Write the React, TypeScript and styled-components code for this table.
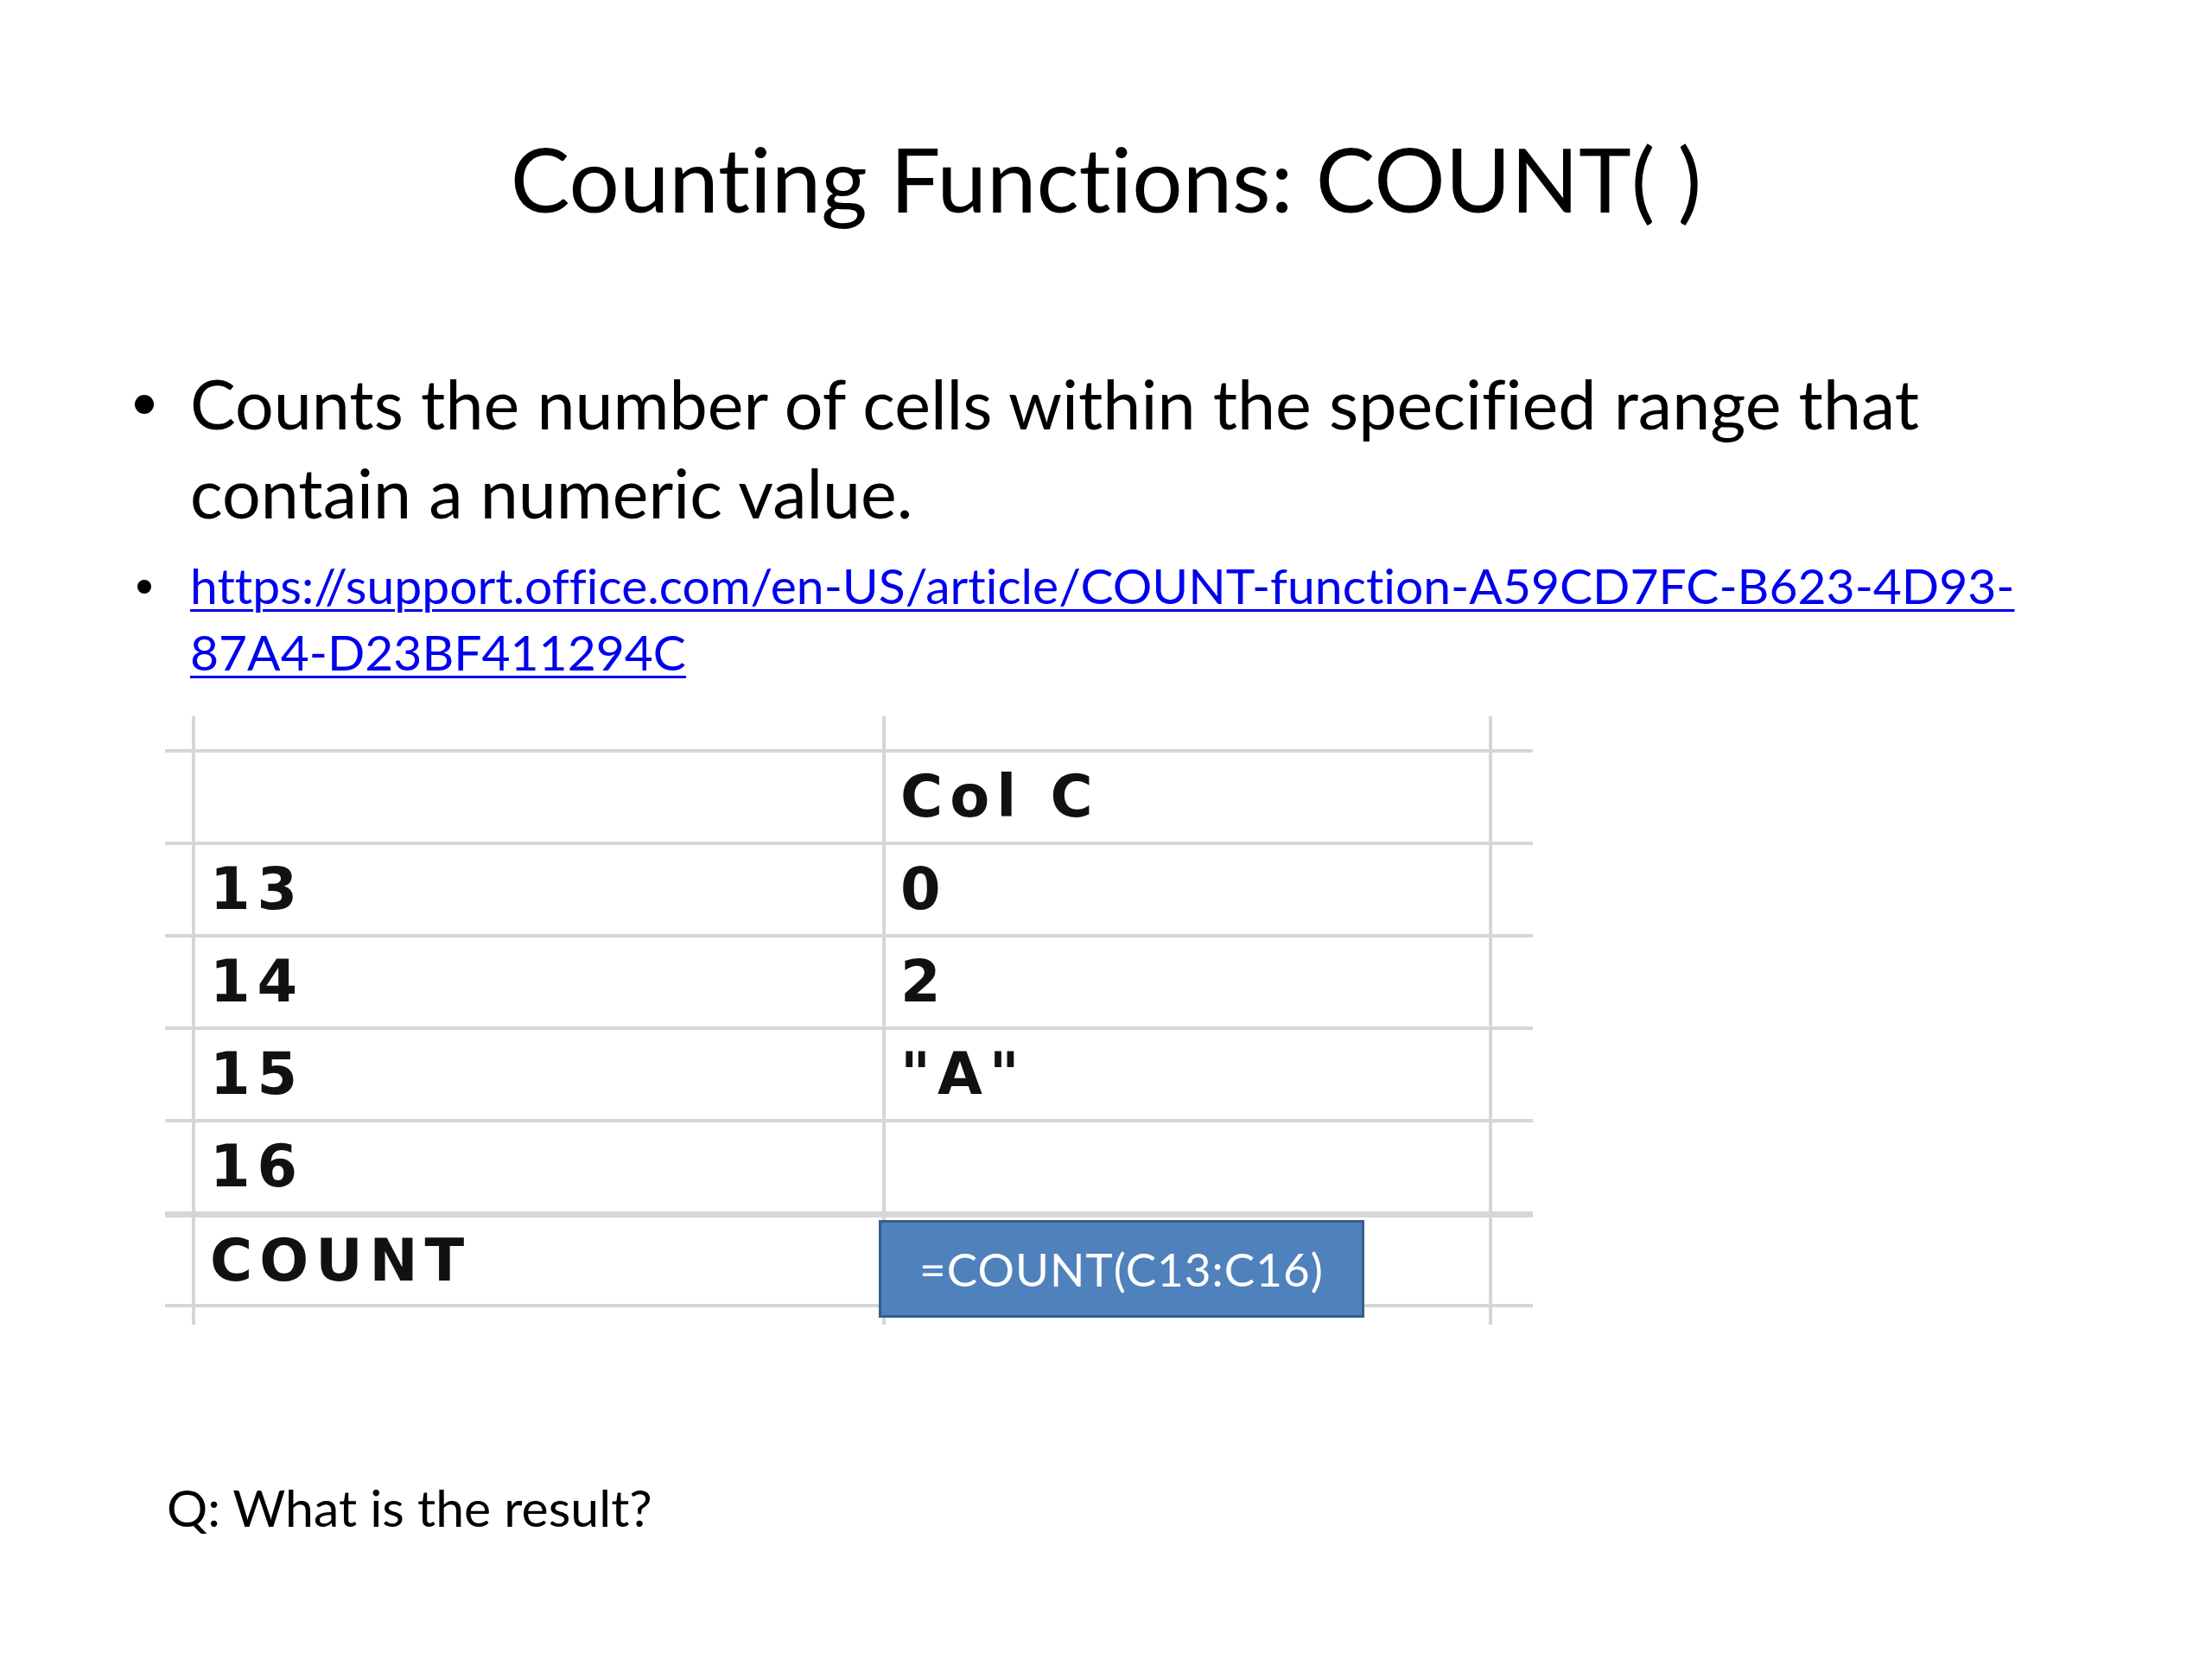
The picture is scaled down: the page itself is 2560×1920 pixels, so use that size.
import React, { FC } from 'react';
import styled, { createGlobalStyle } from 'styled-components';

const GlobalStyle = createGlobalStyle`
  html, body {
    margin: 0;
    padding: 0;
    background: #ffffff;
  }
`;

const Slide = styled.div`
  width: 2560px;
  height: 1920px;
  display: flex;
  flex-direction: column;
  font-family: Lato, 'Open Sans', sans-serif;
  font-variant-ligatures: none;
  color: #000;
  overflow: hidden;
`;

const Title = styled.h1`
  margin: 145px 0 0;
  font-size: 103px;
  font-weight: 400;
  line-height: 1.2;
  text-align: center;
`;

const Bullets = styled.ul`
  list-style: none;
  margin: 146px 0 0;
  padding: 0 0 0 220px;
  display: flex;
  flex-direction: column;
  gap: 18px;
`;

const Item = styled.li<{ $size: number; $lh: number; $dot: number }>`
  position: relative;
  font-size: ${(p) => p.$size}px;
  line-height: ${(p) => p.$lh}px;

  &::before {
    content: '';
    position: absolute;
    left: ${(p) => -53 - p.$dot / 2}px;
    top: ${(p) => p.$lh / 2 - p.$dot / 2 + 2}px;
    width: ${(p) => p.$dot}px;
    height: ${(p) => p.$dot}px;
    border-radius: 50%;
    background: #000;
  }
`;

const Link = styled.a`
  color: #0000ee;
  text-decoration: underline;
  text-decoration-thickness: 3px;
  text-underline-offset: 6px;
`;

const Sheet = styled.div`
  margin: 36px 0 0 191px;
  width: max-content;
  display: grid;
  grid-template-columns: 31px 795px 698px 47px;
  grid-template-rows: 38px repeat(6, 103px) 20px;
  gap: 4px;
  background: #d6d6d6;
`;

const Cell = styled.div<{ $thick?: boolean }>`
  position: relative;
  background: #fff;
  display: flex;
  align-items: center;
  padding-left: 17px;
  border-top: ${(p) => (p.$thick ? '3px solid #d6d6d6' : 'none')};
  font-family: 'DejaVu Sans', Verdana, sans-serif;
  font-weight: 700;
  font-size: 67px;
  letter-spacing: 8px;
  color: #111;
`;

const Formula = styled.div`
  position: absolute;
  left: -8px;
  top: 3px;
  width: 562px;
  height: 113px;
  box-sizing: border-box;
  background: #4f81bd;
  border: 3px solid #385d8a;
  display: flex;
  align-items: center;
  justify-content: center;
  font-family: Lato, 'Open Sans', sans-serif;
  font-weight: 400;
  font-size: 53px;
  letter-spacing: 1px;
  color: #fff;
  z-index: 1;
`;

const Question = styled.p`
  margin: 177px 0 0 193px;
  font-size: 59px;
  line-height: 1.2;
`;

const ROWS: [string, string][] = [
  ['', 'Col C'],
  ['13', '0'],
  ['14', '2'],
  ['15', '"A"'],
  ['16', ''],
];

const Spreadsheet: FC = () => {
  const edge = () => [<Cell key="a" />, <Cell key="b" />, <Cell key="c" />, <Cell key="d" />];
  return (
    <Sheet>
      {edge()}
      {ROWS.map(([a, c], i) => (
        <React.Fragment key={i}>
          <Cell />
          <Cell>{a}</Cell>
          <Cell>{c}</Cell>
          <Cell />
        </React.Fragment>
      ))}
      <Cell $thick />
      <Cell $thick>COUNT</Cell>
      <Cell $thick>
        <Formula>=COUNT(C13:C16)</Formula>
      </Cell>
      <Cell $thick />
      {edge()}
    </Sheet>
  );
};

export default function App() {
  return (
    <Slide>
      <GlobalStyle />
      <Title>Counting Functions: COUNT( )</Title>
      <Bullets>
        <Item $size={79} $lh={103} $dot={22}>
          Counts the number of cells within the specified range that
          <br />
          contain a numeric value.
        </Item>
        <Item $size={57} $lh={77} $dot={16}>
          <Link href="#">
            https://support.office.com/en-US/article/COUNT-function-A59CD7FC-B623-4D93-
            <br />
            87A4-D23BF411294C
          </Link>
        </Item>
      </Bullets>
      <Spreadsheet />
      <Question>Q: What is the result?</Question>
    </Slide>
  );
}
